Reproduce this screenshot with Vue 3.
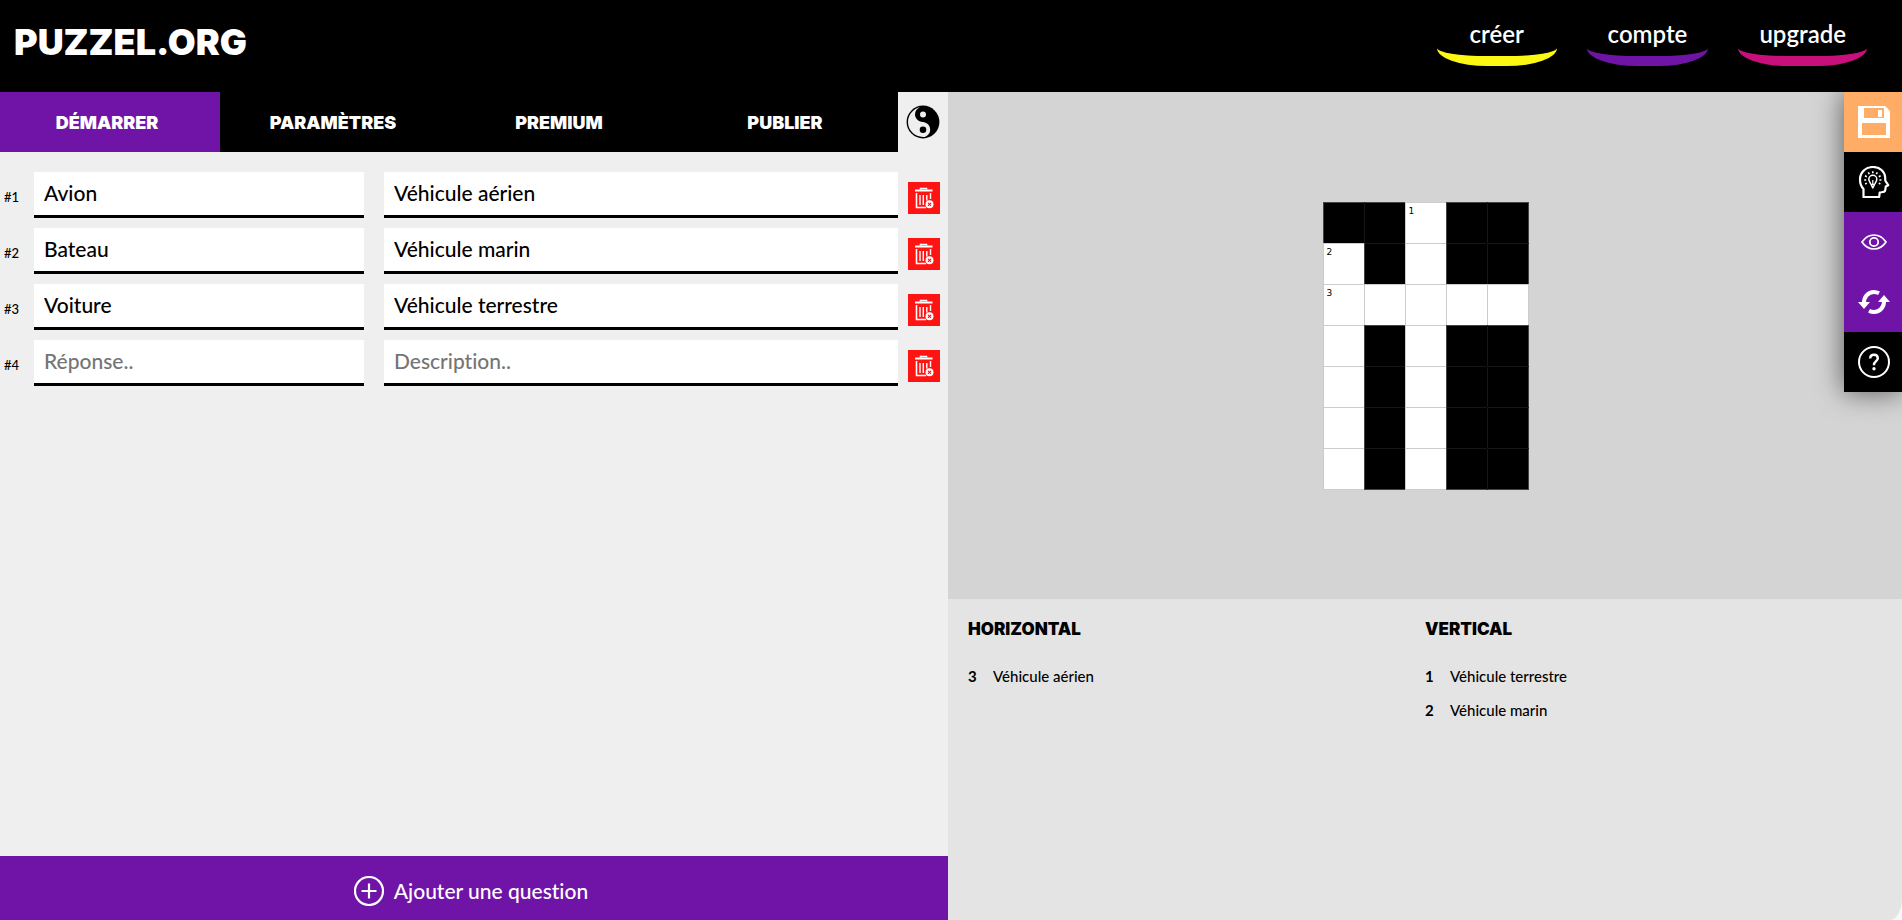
<script setup>
import { ref } from 'vue'

const links = [
  { label: 'créer', tone: 'yellow' },
  { label: 'compte', tone: 'purple' },
  { label: 'upgrade', tone: 'pink' }
]

const tabs = ['Démarrer', 'Paramètres', 'Premium', 'Publier']
const activeTab = ref('Démarrer')

const rows = ref([
  { id: 1, answer: 'Avion', clue: 'Véhicule aérien' },
  { id: 2, answer: 'Bateau', clue: 'Véhicule marin' },
  { id: 3, answer: 'Voiture', clue: 'Véhicule terrestre' },
  { id: 4, answer: '', clue: '' }
])

function addRow() {
  rows.value.push({ id: Math.max(0, ...rows.value.map((r) => r.id)) + 1, answer: '', clue: '' })
}
function removeRow(id) {
  rows.value = rows.value.filter((r) => r.id !== id)
}

// '#' is a blocked cell, '.' an open one, a digit an open cell with its number
const layout = ['##1##', '2#.##', '3....', '.#.##', '.#.##', '.#.##', '.#.##']
const cells = layout.join('').split('')

const clues = [
  { title: 'Horizontal', items: [{ n: 3, text: 'Véhicule aérien' }] },
  {
    title: 'Vertical',
    items: [
      { n: 1, text: 'Véhicule terrestre' },
      { n: 2, text: 'Véhicule marin' }
    ]
  }
]
</script>

<template>
  <div class="page">
    <header class="header">
      <a class="logo" href="#">PUZZEL.ORG</a>
      <nav class="nav">
        <a v-for="l in links" :key="l.label" href="#" :class="['nav-link', l.tone]">{{ l.label }}</a>
      </nav>
    </header>

    <main class="main">
      <section class="editor">
        <div class="tabbar">
          <div class="tabs" role="tablist">
            <button
              v-for="t in tabs"
              :key="t"
              type="button"
              role="tab"
              :aria-selected="activeTab === t"
              :class="['tab', { active: activeTab === t }]"
              @click="activeTab = t"
            >{{ t }}</button>
          </div>
          <button type="button" class="theme" aria-label="Thème">
            <svg width="34" height="34" viewBox="0 0 34 34">
              <circle cx="17" cy="17" r="16.4" fill="#000" />
              <path d="M14 2.3C8.5 3.3 2 9 2 17a15 15 0 0 0 15 15c4 0 7.200-3.400 7.200-7.300 0-4-3-7-7.200-7.600-5-.7-8-3.900-8-7.900 0-3 2-5.500 5-6.900z" fill="#efefef" />
              <circle cx="17" cy="9.600" r="3" fill="#efefef" />
              <circle cx="17" cy="24.800" r="3.300" fill="#000" />
            </svg>
          </button>
        </div>

        <form class="rows" @submit.prevent>
          <div v-for="(r, i) in rows" :key="r.id" class="row">
            <span class="index">#{{ i + 1 }}</span>
            <input v-model="r.answer" class="field" type="text" placeholder="Réponse.." :aria-label="'Réponse ' + (i + 1)" />
            <input v-model="r.clue" class="field" type="text" placeholder="Description.." :aria-label="'Description ' + (i + 1)" />
            <button type="button" class="delete" :aria-label="'Supprimer ' + (i + 1)" @click="removeRow(r.id)">
              <svg width="32" height="32" viewBox="0 0 32 32" fill="none" stroke="#fff">
                <path d="M7 8.500h17.500" stroke-width="2" />
                <path d="M12.500 7.500V6.500h6v1" stroke-width="1.500" />
                <path d="M8.500 11v14.500H18" stroke-width="1.600" />
                <path d="M12 13v10M15.300 13v10M18.800 13v5.500M22.500 11v6" stroke-width="1.400" />
                <circle cx="21.500" cy="22.300" r="4" fill="#fff" stroke="none" />
                <path d="M20 20.800l3 3M23 20.800l-3 3" stroke="#ff1414" stroke-width="1.200" />
              </svg>
            </button>
          </div>
        </form>

        <button type="button" class="add" @click="addRow">
          <svg width="30" height="30" viewBox="0 0 30 30" fill="none" stroke="#fff">
            <circle cx="15" cy="15" r="14" stroke-width="2.200" />
            <path d="M15 7.500v15M7.500 15h15" stroke-width="2.200" />
          </svg>
          <span>Ajouter une question</span>
        </button>
      </section>

      <section class="preview">
        <div class="board-area">
          <div class="board">
            <div v-for="(c, i) in cells" :key="i" :class="['cell', { blocked: c === '#' }]">
              <span v-if="c !== '#' && c !== '.'">{{ c }}</span>
            </div>
          </div>
        </div>

        <div class="clues">
          <section v-for="g in clues" :key="g.title">
            <h2>{{ g.title }}</h2>
            <ul>
              <li v-for="c in g.items" :key="c.n"><b>{{ c.n }}</b><span>{{ c.text }}</span></li>
            </ul>
          </section>
        </div>

        <div class="toolbar">
          <button type="button" class="tool save" aria-label="Enregistrer">
            <svg width="32" height="32" viewBox="0 0 32 32">
              <path d="M0 0h27l5 5v27H0z" fill="#fff" />
              <path d="M6 2h20v10H6zM4 17h24v12H4z" fill="#ffad66" />
              <path d="M20 4h4v7h-4z" fill="#fff" />
            </svg>
          </button>
          <button type="button" class="tool" aria-label="Suggestions">
            <svg width="32" height="32" viewBox="0 0 32 32" fill="none" stroke="#fff" stroke-linejoin="round">
              <path d="M5.500 31V23C3 20.500 2 17.500 2 13.500 2 6.500 7.500 1 15 1c7 0 11.800 4.500 12.200 10.500.1 1.500-.2 2.500.3 3.500l2.700 4.200-2.400 1.300c-.3 1.500-.3 3-.8 4.500-.6 1.500-3.500 1-5.300 1.500L21.200 31z" stroke-width="2.200" />
              <path d="M12.600 18c-.3-2-1.800-2.700-1.800-4.700a4 4 0 0 1 8 0c0 2-1.500 2.700-1.800 4.700M13 18.500h3.600l-1.800 3.500z" stroke-width="1.500" />
              <path d="M14.800 14v4" stroke-width="1.200" />
              <path d="M14.800 5.200v2M10.300 6.400l1 1.700M19.300 6.400l-1 1.700M7 9.700l1.800 1M22.600 9.700l-1.800 1M6.200 14h2M21.400 14h2M7.200 18l1.600-.9M22.400 18l-1.600-.9" stroke-width="1.600" />
            </svg>
          </button>
          <button type="button" class="tool violet" aria-label="Aperçu">
            <svg width="26" height="16" viewBox="0 0 26 16" fill="none" stroke="#fff">
              <path d="M1 8C4 3.500 8 1 13 1s9 2.500 12 7c-3 4.500-7 7-12 7S4 12.500 1 8z" stroke-width="1.700" />
              <circle cx="13" cy="8" r="4.200" stroke-width="1.800" />
            </svg>
          </button>
          <button type="button" class="tool violet" aria-label="Régénérer">
            <svg width="32" height="24" viewBox="0 0 32 24" fill="none" stroke="#fff">
              <path d="M6 13.500C5.500 7 10 2 16 2c1.800 0 3.500.5 5 1.300M26 10.500C26.500 17 22 22 16 22c-1.800 0-3.500-.5-5-1.300" stroke-width="4" />
              <path d="M0 12h12l-6 7zM20 12h12l-6-7z" fill="#fff" stroke="none" />
            </svg>
          </button>
          <button type="button" class="tool" aria-label="Aide">
            <svg width="32" height="32" viewBox="0 0 32 32" fill="none" stroke="#fff">
              <circle cx="16" cy="16" r="15" stroke-width="2" />
              <path d="M12.200 12.500c0-2.300 1.600-3.700 3.800-3.700s3.800 1.400 3.800 3.500c0 2.900-3.800 3.300-3.800 6.200v.7" stroke-width="2.400" />
              <circle cx="16" cy="22.800" r="1.700" fill="#fff" stroke="none" />
            </svg>
          </button>
        </div>
      </section>
    </main>
  </div>
</template>

<style>
body {
  background: #f8f8f8;
}
</style>

<style scoped>
* {
  box-sizing: border-box;
}
.page {
  min-height: 100vh;
  display: flex;
  flex-direction: column;
  font-family: Lato, "Open Sans", sans-serif;
  font-weight: 500;
  font-variant-ligatures: none;
  color: #000;
}
button {
  border: 0;
  padding: 0;
  margin: 0;
  font: inherit;
  font-variant-ligatures: none;
  color: #fff;
  cursor: pointer;
}
svg {
  display: block;
}
.header {
  position: relative;
  z-index: 2;
  height: 92px;
  padding: 0 35px 0 14px;
  background: #000;
  display: flex;
  justify-content: space-between;
}
.logo {
  font-family: Inter, sans-serif;
  font-size: 36px;
  line-height: 84px;
  font-weight: 900;
  color: #fff;
  text-decoration: none;
}
.nav {
  display: flex;
  align-items: flex-start;
  gap: 30px;
  padding-top: 16px;
}
.nav-link {
  min-width: 120px;
  height: 50px;
  padding: 0 21px;
  border-bottom: 10px solid;
  border-radius: 0 0 50px 50px / 0 0 18px 18px;
  text-align: center;
  font-size: 24px;
  line-height: 36px;
  font-weight: 600;
  color: #fff;
  text-decoration: none;
}
.yellow {
  border-color: #fcf814;
}
.purple {
  border-color: #7014a8;
}
.pink {
  border-color: #c8107c;
}
.main {
  flex: 1;
  display: flex;
}
.editor {
  width: calc(50% - 3px);
  background: #efefef;
  display: flex;
  flex-direction: column;
}
.tabbar {
  display: flex;
  height: 60px;
}
.tabs {
  flex: 1;
  display: grid;
  grid-template-columns: 220fr 226fr 226fr 226fr;
  background: #000;
}
.tab {
  background: none;
  font-family: Inter, sans-serif;
  font-size: 18px;
  font-weight: 900;
  text-transform: uppercase;
}
.tab.active {
  background: #7014a8;
  padding-right: 6px;
}
.theme {
  width: 50px;
  background: none;
  display: flex;
  align-items: center;
  justify-content: center;
}
.rows {
  flex: 1;
  padding-top: 20px;
  display: flex;
  flex-direction: column;
  gap: 10px;
}
.row {
  display: grid;
  grid-template-columns: 34px 330fr 20px 514fr 50px;
  align-items: center;
}
.index {
  padding: 4px 0 0 4px;
  font-size: 13px;
}
.field {
  width: 100%;
  min-width: 0;
  height: 46px;
  border: 0;
  border-bottom: 3px solid #000;
  border-radius: 0;
  padding: 0 10px 2px;
  background: #fff;
  font: inherit;
  font-size: 21px;
  font-variant-ligatures: none;
  color: #000;
}
.field + .field {
  grid-column: 4;
}
.field::placeholder {
  color: #757575;
}
.delete {
  grid-column: 5;
  width: 32px;
  height: 32px;
  margin: 6px 0 0 10px;
  background: #ff1414;
}
.add {
  height: 64px;
  padding: 6px 6px 0 0;
  background: #7014a8;
  display: flex;
  align-items: center;
  justify-content: center;
  gap: 10px;
  font-size: 21px;
}
.add span {
  padding-bottom: 2px;
}
.preview {
  position: relative;
  flex: 1;
  display: grid;
  grid-template-rows: 507fr 321fr;
}
.board-area {
  background: #d4d4d4;
  display: flex;
  align-items: center;
  justify-content: center;
}
.board {
  display: grid;
  grid-template-columns: repeat(5, 41px);
  grid-auto-rows: 41px;
  padding-bottom: 1px;
}
.cell {
  width: 42px;
  height: 42px;
  border: 1px solid #ccc;
  background: #fff;
  padding: 2px 3px;
  font: 9px/12px "DejaVu Sans", sans-serif;
}
.blocked {
  border-color: rgba(0, 0, 0, 0.68);
  background: #000 padding-box;
}
.clues {
  padding: 20px;
  background: #e4e4e4;
  border-bottom-right-radius: 12px 22px;
  display: grid;
  grid-template-columns: 1fr 1fr;
}
h2 {
  margin: 0 0 20px;
  font-family: Inter, sans-serif;
  font-size: 17px;
  line-height: 20px;
  font-weight: 900;
  text-transform: uppercase;
}
ul {
  list-style: none;
  margin: 0;
  padding: 0;
  font-size: 15px;
  line-height: 34px;
}
li {
  display: flex;
}
li b {
  width: 25px;
}
.toolbar {
  position: absolute;
  top: 0;
  right: 0;
  width: 58px;
  box-shadow: 0 0 28px rgba(0, 0, 0, 0.6);
}
.tool {
  width: 100%;
  height: 60px;
  padding-left: 2px;
  background: #000;
  display: flex;
  align-items: center;
  justify-content: center;
}
.save {
  background: #ffad66;
}
.violet {
  background: #7014a8;
}
</style>
